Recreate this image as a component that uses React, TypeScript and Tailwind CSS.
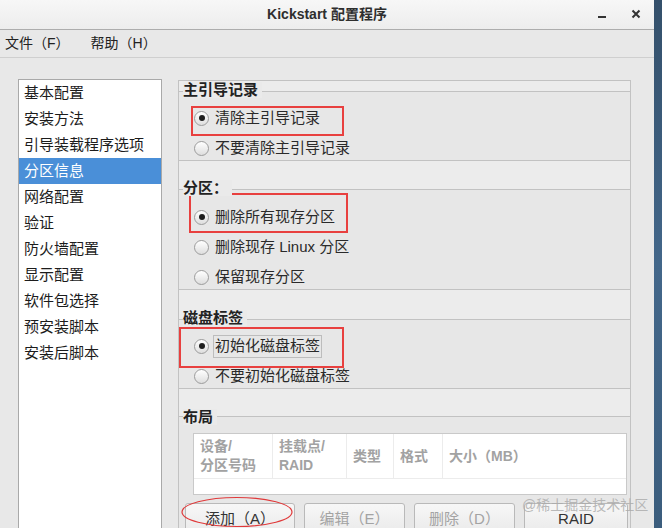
import React from 'react'

const FONT = { fontFamily: '"Liberation Sans", "Noto Sans CJK SC", sans-serif' }

const navItems = ['基本配置', '安装方法', '引导装载程序选项', '分区信息', '网络配置', '验证', '防火墙配置', '显示配置', '软件包选择', '预安装脚本', '安装后脚本']

function Radio({ checked, label, focus }: { checked?: boolean; label: string; focus?: boolean }) {
  return (
    <div className="flex h-[24px] items-center pl-[15px]">
      <span className="flex h-[15px] w-[15px] items-center justify-center rounded-full border border-[#9c9c9c] bg-gradient-to-b from-white to-[#dedede]">
        {checked && <span className="h-[6px] w-[6px] rounded-full bg-[#1e1e1e]" />}
      </span>
      {focus ? (
        <span className="ml-[4px] flex h-[23px] items-center border border-[#bdbdbd] px-[1px] text-[15px] text-[#2a2a2a]">{label}</span>
      ) : (
        <span className="ml-[6px] text-[15px] leading-[24px] text-[#2a2a2a]">{label}</span>
      )}
    </div>
  )
}

function Section({ label, strip, pt, children }: { label: string; strip: number; pt: string; children: React.ReactNode }) {
  return (
    <div>
      <div className="relative bg-[#ececec]" style={{ height: strip }}>
        <span className="absolute -bottom-[7px] left-[4px] z-10 bg-[#eaeaea] pr-[4px] text-[15px] font-bold leading-[16px] text-[#222]">
          {label}
        </span>
      </div>
      <div className={`border-t border-b border-[#c2c2c2] bg-[#e7e7e7] ${pt}`}>{children}</div>
    </div>
  )
}

function Btn({ label, disabled, w }: { label: string; disabled?: boolean; w: string }) {
  return (
    <div
      className={`flex h-[34px] shrink-0 items-start justify-center rounded-[3px] border border-[#b9b9b9] bg-gradient-to-b from-[#f7f7f7] to-[#e9e9e9] pt-[4px] text-[15px] ${w} ${disabled ? 'text-[#a3a3a3]' : 'text-[#333]'}`}
    >
      {label}
    </div>
  )
}

export default function App() {
  return (
    <div className="relative flex h-[528px] w-[662px] overflow-hidden bg-[#e8e8e8]" style={FONT}>
      <div className="flex w-[654px] shrink-0 flex-col">
        {/* title bar */}
        <div className="relative flex h-[30px] shrink-0 items-center justify-center border-b border-[#adadad] bg-gradient-to-b from-[#f7f7f7] to-[#ededed]">
          <span className="text-[14px] font-bold text-[#2e2e2e]">Kickstart 配置程序</span>
          <span className="absolute left-[598px] top-[16px] h-[2px] w-[8px] bg-[#333]" />
          <svg className="absolute left-[631px] top-[9px]" width="10" height="10" viewBox="0 0 10 10">
            <path d="M1.5 1.5 L8.5 8.5 M8.5 1.5 L1.5 8.5" stroke="#333" strokeWidth="2" />
          </svg>
        </div>
        {/* menu bar */}
        <div className="flex h-[28px] shrink-0 items-center gap-[21px] border-b border-[#cfcfcf] bg-[#e8e8e8] pl-[5px] text-[14px] text-[#222]">
          <span>文件（F）</span>
          <span>帮助（H）</span>
        </div>
        {/* body */}
        <div className="flex min-h-0 flex-1 overflow-hidden pt-[21px]">
          <div className="ml-[18px] w-[144px] shrink-0 border border-b-0 border-[#a9a9a9] bg-white">
            {navItems.map((item) => (
              <div
                key={item}
                className={`h-[26px] pl-[5px] text-[15px] leading-[26px] ${item === '分区信息' ? 'bg-[#4a8fd8] text-white' : 'text-[#1c1c1c]'}`}
              >
                {item}
              </div>
            ))}
          </div>
          <div className="ml-[16px] mt-[1px] w-[453px] shrink-0 border border-b-0 border-[#c2c2c2]">
            <Section label="主引导记录" strip={10} pt="pt-[14px]">
              <div className="flex flex-col gap-[6px]">
                <Radio checked label="清除主引导记录" />
                <Radio label="不要清除主引导记录" />
              </div>
            </Section>
            <Section label="分区：" strip={28} pt="pt-[15px]">
              <div className="flex flex-col gap-[6px]">
                <Radio checked label="删除所有现存分区" />
                <Radio label="删除现存  Linux 分区" />
                <Radio label="保留现存分区" />
              </div>
            </Section>
            <Section label="磁盘标签" strip={29} pt="pt-[14px]">
              <div className="flex flex-col gap-[6px]">
                <Radio checked focus label="初始化磁盘标签" />
                <Radio label="不要初始化磁盘标签" />
              </div>
            </Section>
            <div>
              <div className="relative h-[27px] bg-[#ececec]">
                <span className="absolute -bottom-[9px] left-[4px] z-10 bg-[#eaeaea] pr-[4px] text-[15px] font-bold leading-[16px] text-[#222]">
                  布局
                </span>
              </div>
              <div className="h-[200px] border-t border-[#c2c2c2] bg-[#e7e7e7] pt-[16px]">
                <div className="ml-[14px] mr-[3px] border border-[#c9c9c9] bg-white">
                  <div className="flex h-[45px] border-b border-[#ececec] text-[14px] font-bold leading-[19px] text-[#a2a2a2]">
                    <div className="flex w-[79px] flex-col justify-center border-r border-[#ececec] pl-[6px]">
                      <span>设备/</span>
                      <span>分区号码</span>
                    </div>
                    <div className="flex w-[74px] flex-col justify-center border-r border-[#ececec] pl-[6px]">
                      <span>挂载点/</span>
                      <span>RAID</span>
                    </div>
                    <div className="flex w-[47px] items-center border-r border-[#ececec] pl-[6px]">类型</div>
                    <div className="flex w-[49px] items-center border-r border-[#ececec] pl-[6px]">格式</div>
                    <div className="flex flex-1 items-center pl-[6px]">大小（MB）</div>
                  </div>
                  <div className="h-[15px]" />
                </div>
                <div className="ml-[6px] mt-[8px] flex gap-[9px]">
                  <Btn label="添加（A）" w="w-[110px]" />
                  <Btn label="编辑（E）" disabled w="w-[101px]" />
                  <Btn label="删除（D）" disabled w="w-[101px]" />
                  <Btn label="RAID" w="w-[104px]" />
                </div>
              </div>
            </div>
          </div>
        </div>
      </div>
      {/* desktop edge */}
      <div className="flex-1 bg-gradient-to-b from-[#34506b] via-[#43678a] to-[#3b5d7d]" />

      {/* annotations */}
      <div className="pointer-events-none absolute left-[191px] top-[106px] h-[30px] w-[153px] border-2 border-[#e8403f]" />
      <div className="pointer-events-none absolute left-[189px] top-[193px] h-[40px] w-[159px] border-2 border-[#e8403f]" />
      <div className="pointer-events-none absolute left-[179px] top-[327px] h-[41px] w-[165px] border-2 border-[#e8403f]" />
      <svg className="pointer-events-none absolute left-[180px] top-[495px]" width="116" height="36" viewBox="0 0 116 36">
        <ellipse cx="57" cy="17" rx="55" ry="14.5" fill="none" stroke="#e0393a" strokeWidth="1.2" />
      </svg>
      <span className="pointer-events-none absolute left-[522px] top-[495px] text-[14px] text-[#a9a9a9]/80">@稀土掘金技术社区</span>
    </div>
  )
}
